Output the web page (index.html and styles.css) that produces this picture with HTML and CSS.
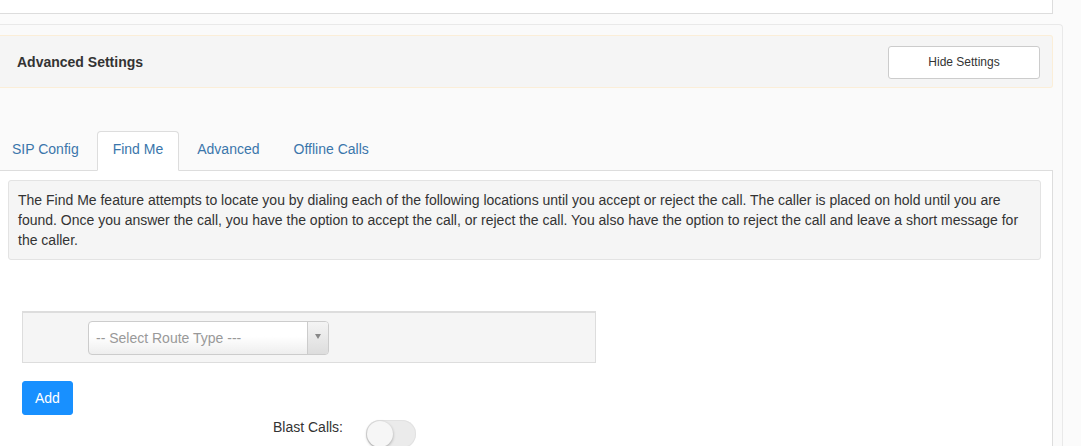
FILE: index.html
```html
<!DOCTYPE html>
<html>
<head>
<meta charset="utf-8">
<link rel="stylesheet" href="styles.css">
</head>
<body>
<div class="page">
  <div class="top-panel"></div>
  <div class="settings">
    <div class="adv-header">
      <span class="adv-title">Advanced Settings</span>
      <button class="btn-hide" type="button">Hide Settings</button>
    </div>
    <ul class="nav-tabs">
      <li><a>SIP Config</a></li>
      <li class="active"><a>Find Me</a></li>
      <li><a>Advanced</a></li>
      <li><a>Offline Calls</a></li>
    </ul>
    <div class="tab-content">
      <div class="well">The Find Me feature attempts to locate you by dialing each of the following locations until you accept or reject the call. The caller is placed on hold until you are found. Once you answer the call, you have the option to accept the call, or reject the call. You also have the option to reject the call and leave a short message for the caller.</div>
      <div class="route-panel">
        <div class="select">
          <span class="select-text">-- Select Route Type ---</span>
          <span class="select-arrow"><span class="tri"></span></span>
        </div>
      </div>
      <button class="btn-add" type="button">Add</button>
      <div class="blast-row">
        <label class="blast-label">Blast Calls:</label>
        <span class="toggle"><span class="knob"></span></span>
      </div>
    </div>
  </div>
</div>
</body>
</html>
```
FILE: styles.css
```css
html, body {
  margin: 0;
  padding: 0;
}
body {
  background: #fbfbfb;
  font-family: "Liberation Sans", Arial, Helvetica, sans-serif;
  font-size: 14px;
  color: #333;
  overflow: hidden;
}
.page {
  width: 1063px;
  height: 446px;
  display: flex;
  flex-direction: column;
}
.top-panel {
  width: 1052px;
  height: 13px;
  background: #fff;
  border-right: 1px solid #ddd;
  border-bottom: 1px solid #ddd;
  flex: none;
}
.settings {
  margin-top: 10px;
  flex: 1;
  background: #fafafa;
  border-top: 1px solid #e9e9e9;
  border-right: 1px solid #e9e9e9;
  border-top-right-radius: 4px;
  padding: 10px 9px 0 0;
  display: flex;
  flex-direction: column;
}
.adv-header {
  background: #f5f5f5;
  border-top: 1px solid #fbeed8;
  border-bottom: 1px solid #fbeed8;
  border-right: 1px solid #fbeed8;
  border-radius: 0 3px 3px 0;
  padding: 10px 12px 0 17px;
  box-sizing: border-box;
  height: 53px;
  display: flex;
  justify-content: space-between;
  align-items: flex-start;
}
.adv-title {
  font-weight: bold;
  font-size: 14px;
  line-height: 33px;
  color: #333;
}
.btn-hide {
  width: 152px;
  height: 33px;
  background: #fff;
  border: 1px solid #ccc;
  border-radius: 3px;
  font-family: "Liberation Sans", Arial, sans-serif;
  font-size: 12px;
  line-height: 31px;
  color: #333;
  padding: 0 0 1px;
}
.nav-tabs {
  list-style: none;
  margin: 43px 0 0 -4px;
  padding: 0;
  display: flex;
  border-bottom: 1px solid #ddd;
}
.nav-tabs li {
  margin-right: 2px;
  margin-bottom: -1px;
}
.nav-tabs a {
  display: block;
  padding: 7px 15px 11px;
  line-height: 20px;
  border: 1px solid transparent;
  border-radius: 4px 4px 0 0;
  color: #3a76ab;
}
.nav-tabs li.active a {
  background: #fff;
  border-color: #ddd #ddd transparent #ddd;
}
.tab-content {
  flex: 1;
  background: #fff;
  border-right: 1px solid #ddd;
  padding: 9px 11px 0 8px;
}
.well {
  background: #f5f5f5;
  border: 1px solid #e3e3e3;
  border-radius: 3px;
  padding: 9px;
  line-height: 20px;
  color: #333;
}
.route-panel {
  margin: 51px 0 0 14px;
  background: #f5f5f5;
  border: 1px solid #ddd;
  border-top: 2px solid #ddd;
  padding: 8px 0 7px 65px;
  box-sizing: border-box;
  width: 574px;
}
.select {
  width: 241px;
  height: 34px;
  box-sizing: border-box;
  border: 1px solid #ccc;
  border-radius: 4px;
  background: linear-gradient(#fff 45%, #eee);
  display: flex;
  align-items: stretch;
}
.select-text {
  flex: 1;
  padding-left: 7px;
  line-height: 32px;
  color: #999;
}
.select-arrow {
  width: 21px;
  border-left: 1px solid #ccc;
  background: linear-gradient(#f4f4f4, #ddd);
  border-radius: 0 3px 3px 0;
  display: flex;
  justify-content: center;
  padding-top: 12px;
  box-sizing: border-box;
}
.tri {
  width: 0;
  height: 0;
  border-left: 3px solid transparent;
  border-right: 3px solid transparent;
  border-top: 5px solid #888;
}
.btn-add {
  margin: 18px 0 0 14px;
  display: block;
  height: 34px;
  padding: 0 12px;
  background: #1890ff;
  border: 1px solid #1890ff;
  border-radius: 3px;
  color: #fff;
  font-family: "Liberation Sans", Arial, sans-serif;
  font-size: 14px;
  line-height: 20px;
}
.blast-row {
  margin-top: 2px;
  display: flex;
  align-items: flex-start;
  gap: 23px;
}
.blast-label {
  width: 335px;
  text-align: right;
  line-height: 20px;
  color: #333;
}
.toggle {
  margin-top: 3px;
  width: 50px;
  height: 28px;
  border-radius: 14px;
  background: #ebebeb;
  box-shadow: inset 0 0 0 1px #e2e2e2;
  position: relative;
  flex: none;
}
.knob {
  position: absolute;
  left: 1px;
  top: 1px;
  width: 26px;
  height: 26px;
  border-radius: 50%;
  background: #f6f6f6;
  box-shadow: 0 1px 3px rgba(0,0,0,0.3);
}
```
